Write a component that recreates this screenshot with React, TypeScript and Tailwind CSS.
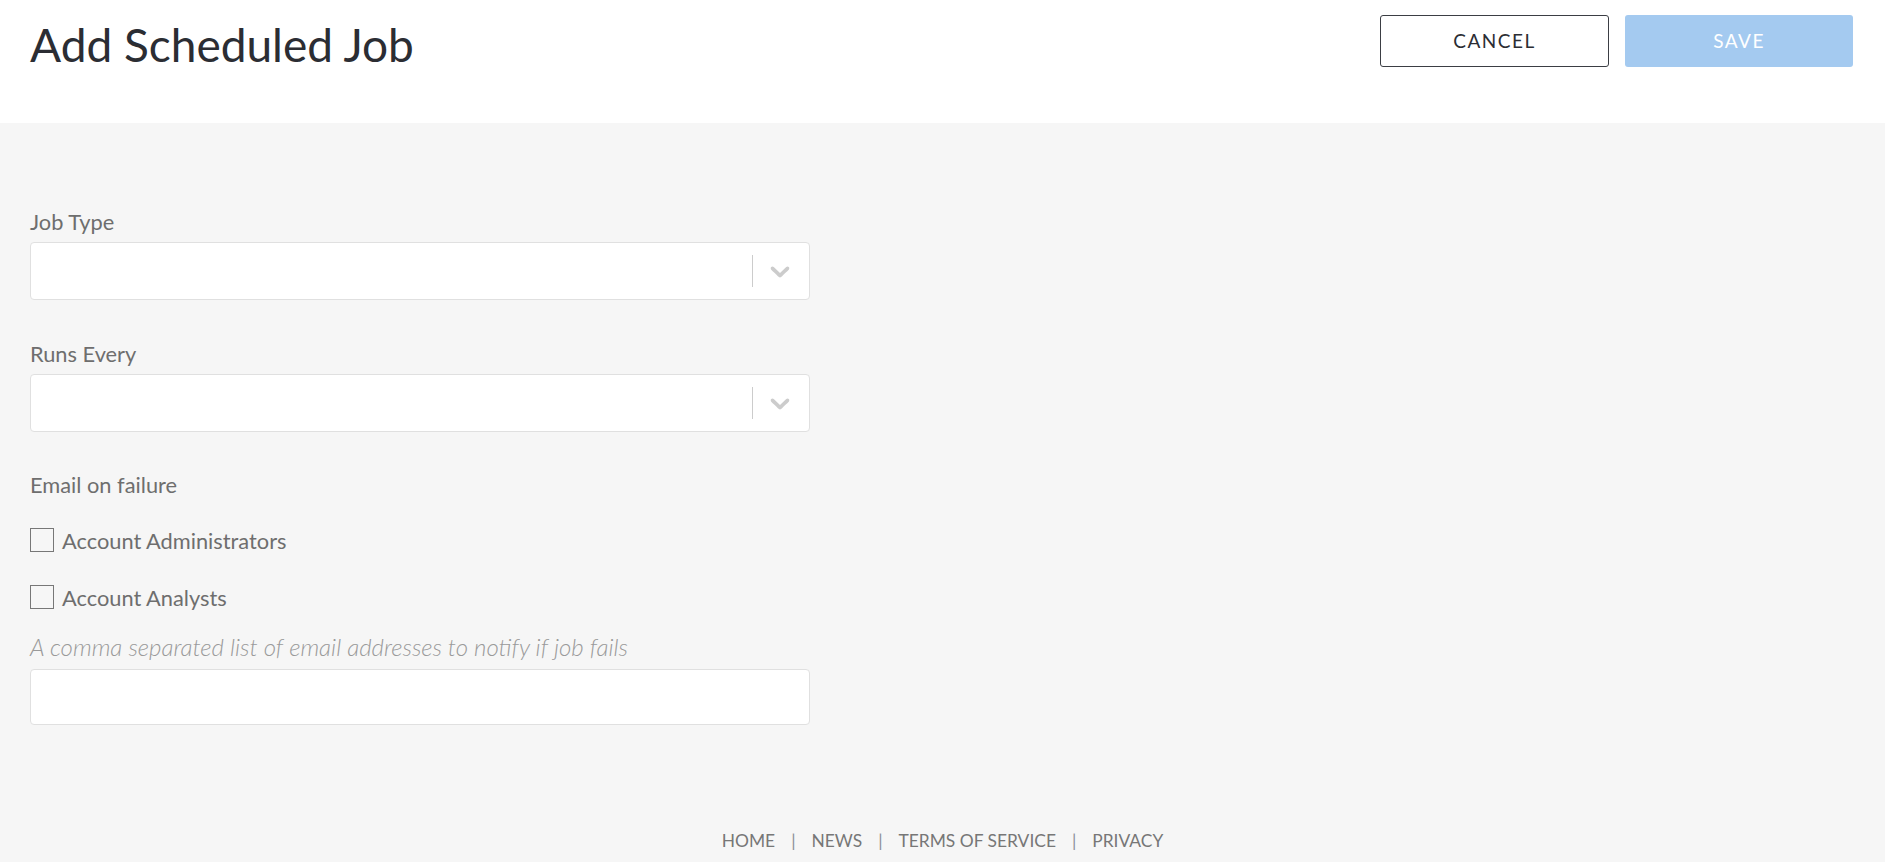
import React from 'react';

const font = { fontFamily: 'Lato, "Open Sans", sans-serif' };

// react-select style dropdown indicator
const Chevron: React.FC = () => (
  <svg width="32" height="32" viewBox="0 0 20 20" fill="#cccccc" aria-hidden="true">
    <path d="M4.516 7.548c0.436-0.446 1.043-0.481 1.576 0l3.908 3.747 3.908-3.747c0.533-0.481 1.141-0.446 1.574 0 0.436 0.445 0.408 1.197 0 1.615-0.406 0.418-4.695 4.502-4.695 4.502-0.217 0.223-0.502 0.335-0.787 0.335s-0.57-0.112-0.789-0.335c0 0-4.287-4.084-4.695-4.502s-0.436-1.17 0-1.615z" />
  </svg>
);

const SelectField: React.FC<{ label: string; className?: string }> = ({ label, className }) => (
  <div className={className}>
    <label className="block text-[21.8px] leading-[24px] text-[#6e6e6e] mb-[8px]">{label}</label>
    <div className="h-[58px] bg-white border border-[#e0e0e0] rounded-[4px] flex items-center justify-end">
      <span className="w-px h-[32px] bg-[#cccccc]" />
      <span className="ml-[11px] mr-[13px] flex items-center">
        <Chevron />
      </span>
    </div>
  </div>
);

const CheckRow: React.FC<{ label: string; className?: string }> = ({ label, className }) => (
  <label className={`flex items-center h-[24px] ${className ?? ''}`}>
    <span className="w-[24px] h-[24px] border-[1.5px] border-[#777777] bg-transparent shrink-0" />
    <span className="ml-[8px] text-[21.8px] leading-[24px] text-[#6e6e6e] pt-[2px]">{label}</span>
  </label>
);

const App: React.FC = () => {
  const links = ['HOME', 'NEWS', 'TERMS OF SERVICE', 'PRIVACY'];

  return (
    <div className="min-h-screen bg-[#f6f6f6] flex flex-col" style={font}>
      <header className="bg-white h-[123px] flex items-start justify-between pl-[30px] pr-[32px]">
        <h1 className="text-[46px] leading-[1.2] text-[#2b2d33] pt-[17px] font-normal">Add Scheduled Job</h1>
        <div className="flex gap-[16px] pt-[15px]">
          <button className="w-[229px] h-[52px] bg-white border-[1.5px] border-[#3b3e44] rounded-[3px] text-[19px] tracking-[1.5px] text-[#2b2d33]">
            CANCEL
          </button>
          <button className="w-[228px] h-[52px] bg-[#a4caf0] rounded-[3px] text-[19px] tracking-[1.5px] text-white">
            SAVE
          </button>
        </div>
      </header>

      <main className="pl-[30px] pt-[87px] w-[810px]">
        <SelectField label="Job Type" />
        <SelectField label="Runs Every" className="mt-[42px]" />

        <div className="mt-[41px] text-[21.8px] leading-[24px] text-[#6e6e6e]">Email on failure</div>
        <CheckRow label="Account Administrators" className="mt-[31px]" />
        <CheckRow label="Account Analysts" className="mt-[33px]" />

        <p className="mt-[24px] text-[24px] leading-[28px] italic font-light text-[#9a9a9a]">
          A comma separated list of email addresses to notify if job fails
        </p>
        <input
          type="text"
          className="mt-[8px] block w-full h-[56px] bg-white border border-[#e0e0e0] rounded-[4px] outline-none px-3"
        />
      </main>

      <footer className="mt-[104px] pb-[20px] flex justify-center text-[17.4px] leading-[24px] text-[#777777]">
        {links.map((l, i) => (
          <React.Fragment key={l}>
            {i > 0 && <span className="mx-[16px] text-[#8a8f96]">|</span>}
            <a className="uppercase">{l}</a>
          </React.Fragment>
        ))}
      </footer>
    </div>
  );
};

export default App;
